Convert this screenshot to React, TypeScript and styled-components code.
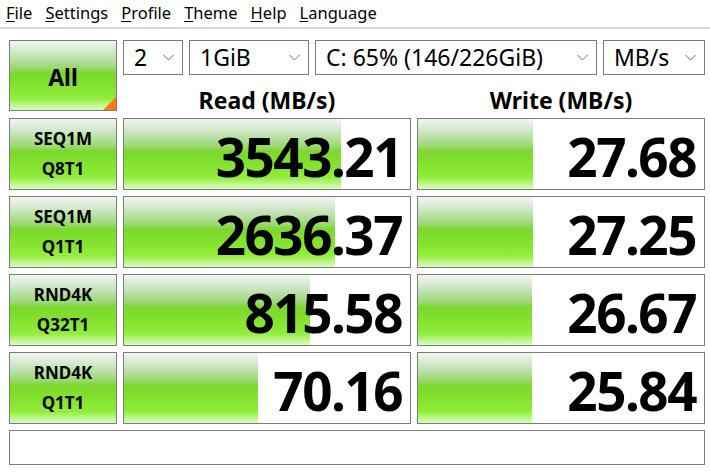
import React from "react";
import styled, { createGlobalStyle } from "styled-components";

const Global = createGlobalStyle`
  html, body { margin: 0; padding: 0; background: #ffffff; }
  body { font-family: "Noto Sans", "Open Sans", sans-serif; color: #000; }
`;

const GREEN = `linear-gradient(to bottom,
  #f3f5f1 0%, #d6ead0 14%, #b4dea0 28%, #98d86c 40%, #7cd82c 46%,
  #80de2e 58%, #8ae834 74%, #92ee3c 84%, #b6f47e 91%, #dafcc0 100%)`;

const Window = styled.div`
  width: 710px;
  height: 472px;
  display: flex;
  flex-direction: column;
  background: #fff;
  overflow: hidden;
`;

const MenuBar = styled.div`
  height: 27px;
  display: flex;
  align-items: center;
  padding-left: 6px;
  gap: 13px;
  border-bottom: 2px solid #d7d7d7;
  font-size: 16.5px;
`;

const MenuItem = styled.span`
  line-height: 22px;
  padding-bottom: 1px;
`;

const Key = styled.span`
  text-decoration: underline;
  text-underline-offset: 2px;
  text-decoration-thickness: 1px;
`;

const Main = styled.div`
  display: flex;
  flex-direction: column;
  gap: 7px;
  padding: 11px 5px 0 9px;
`;

const Top = styled.div`
  display: grid;
  grid-template-columns: 108px 1fr;
  column-gap: 6px;
`;

const AllButton = styled.div`
  position: relative;
  height: 71px;
  box-sizing: border-box;
  border: 1px solid #7c7c7c;
  background: ${GREEN};
  display: flex;
  align-items: center;
  justify-content: center;
  font-weight: 700;
  font-size: 23px;
  padding-top: 2px;
`;

const Corner = styled.div`
  position: absolute;
  right: 0;
  bottom: 0;
  width: 0;
  height: 0;
  border-style: solid;
  border-width: 0 0 13px 13px;
  border-color: transparent transparent #ff7c0a transparent;
`;

const TopRight = styled.div`
  display: flex;
  flex-direction: column;
`;

const ComboRow = styled.div`
  display: grid;
  grid-template-columns: 60px 120px 282px 1fr;
  column-gap: 6px;
  height: 35px;
`;

const Combo = styled.div`
  box-sizing: border-box;
  border: 1px solid #7a7a7a;
  background: #fff;
  display: flex;
  align-items: center;
  justify-content: space-between;
  padding: 0 8px 0 10px;
  font-size: 23px;
  line-height: 1.2;
`;

const HeaderRow = styled.div`
  display: grid;
  grid-template-columns: 288px 288px;
  column-gap: 6px;
  height: 36px;
`;

const HeaderCell = styled.div`
  display: flex;
  align-items: flex-end;
  justify-content: center;
  font-weight: 700;
  font-size: 23px;
  line-height: 1.2;
  margin-bottom: -4px;
`;

const Row = styled.div`
  display: grid;
  grid-template-columns: 108px 288px 288px;
  column-gap: 6px;
  height: 71px;
`;

const LabelBox = styled.div`
  box-sizing: border-box;
  border: 1px solid #7c7c7c;
  background: ${GREEN};
  display: flex;
  flex-direction: column;
  align-items: center;
  justify-content: center;
  font-weight: 700;
  font-size: 17px;
  line-height: 30px;
  padding-top: 1px;
`;

const ValueBox = styled.div`
  position: relative;
  box-sizing: border-box;
  border: 1px solid #7c7c7c;
  background: #fff;
  display: flex;
  align-items: center;
  justify-content: flex-end;
`;

const Bar = styled.div`
  position: absolute;
  left: 0;
  top: 0;
  bottom: 0;
  background: ${GREEN};
`;

const Value = styled.span`
  position: relative;
  font-weight: 700;
  font-size: 53px;
  letter-spacing: -1.5px;
  line-height: 1.2;
  padding-right: 8px;
  padding-top: 6px;
`;

const Status = styled.div`
  height: 35px;
  box-sizing: border-box;
  border: 1px solid #7c7c7c;
  background: #fff;
`;

const Chevron = () => (
  <svg width="11" height="7" viewBox="0 0 11 7" fill="none">
    <path d="M0.5 1 L5.5 6 L10.5 1" stroke="#6a6a6a" strokeWidth="1" />
  </svg>
);

const rows = [
  { l1: "SEQ1M", l2: "Q8T1", read: "3543.21", rw: 217, write: "27.68", ww: 115 },
  { l1: "SEQ1M", l2: "Q1T1", read: "2636.37", rw: 211, write: "27.25", ww: 115 },
  { l1: "RND4K", l2: "Q32T1", read: "815.58", rw: 186, write: "26.67", ww: 114 },
  { l1: "RND4K", l2: "Q1T1", read: "70.16", rw: 134, write: "25.84", ww: 114 },
];

const menus: [string, string][] = [
  ["F", "ile"],
  ["S", "ettings"],
  ["P", "rofile"],
  ["T", "heme"],
  ["H", "elp"],
  ["L", "anguage"],
];

export default function App() {
  return (
    <>
      <Global />
      <Window>
        <MenuBar>
          {menus.map(([k, rest]) => (
            <MenuItem key={k}>
              <Key>{k}</Key>
              {rest}
            </MenuItem>
          ))}
        </MenuBar>
        <Main>
          <Top>
            <AllButton>
              All
              <Corner />
            </AllButton>
            <TopRight>
              <ComboRow>
                <Combo>
                  <span>2</span>
                  <Chevron />
                </Combo>
                <Combo>
                  <span>1GiB</span>
                  <Chevron />
                </Combo>
                <Combo>
                  <span>C: 65% (146/226GiB)</span>
                  <Chevron />
                </Combo>
                <Combo>
                  <span>MB/s</span>
                  <Chevron />
                </Combo>
              </ComboRow>
              <HeaderRow>
                <HeaderCell>Read (MB/s)</HeaderCell>
                <HeaderCell>Write (MB/s)</HeaderCell>
              </HeaderRow>
            </TopRight>
          </Top>
          {rows.map((r) => (
            <Row key={r.l1 + r.l2}>
              <LabelBox>
                <span>{r.l1}</span>
                <span>{r.l2}</span>
              </LabelBox>
              <ValueBox>
                <Bar style={{ width: r.rw }} />
                <Value>{r.read}</Value>
              </ValueBox>
              <ValueBox>
                <Bar style={{ width: r.ww }} />
                <Value>{r.write}</Value>
              </ValueBox>
            </Row>
          ))}
          <Status />
        </Main>
      </Window>
    </>
  );
}
